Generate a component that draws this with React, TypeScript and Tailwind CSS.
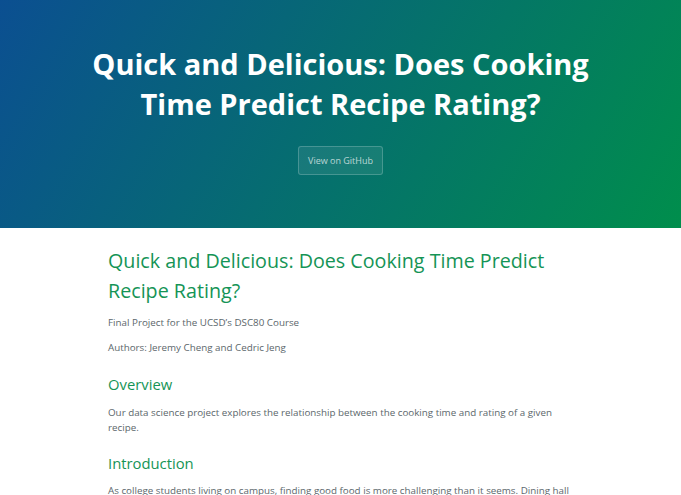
export default function App() {
  return (
    <div className="min-h-[495px] bg-white font-['Open_Sans',sans-serif] text-[#5b666b]">
      {/* Page header */}
      <section className="flex flex-col items-center pt-[44px] pb-[53px] text-center text-white bg-[linear-gradient(120deg,#0b4f91,#008e4c)]">
        <h1 className="w-[520px] text-[29px] font-bold leading-[40px]">
          Quick and Delicious: Does Cooking Time Predict Recipe Rating?
        </h1>
        <a
          href="#"
          className="mt-[22px] inline-block rounded-[3px] border border-white/20 bg-white/[0.08] px-[9px] py-[6.5px] text-[9px] leading-[14px] text-white/70"
        >
          View on GitHub
        </a>
      </section>

      {/* Main content */}
      <main className="mx-auto max-w-[465px] pt-[18px] text-[9.8px] leading-[15px]">
        <h1 className="mb-[9px] text-[19.7px] leading-[30px] text-[#159456]">
          Quick and Delicious: Does Cooking Time Predict Recipe Rating?
        </h1>
        <p className="mb-[10px]">Final Project for the UCSD’s DSC80 Course</p>
        <p className="mb-[10px]">Authors: Jeremy Cheng and Cedric Jeng</p>

        <h2 className="mt-[18px] mb-[10px] text-[14.8px] leading-[22px] text-[#159456]">Overview</h2>
        <p className="mb-[10px]">
          Our data science project explores the relationship between the cooking time and rating of a given recipe.
        </p>

        <h2 className="mt-[17px] mb-[9px] text-[14.8px] leading-[22px] text-[#159456]">Introduction</h2>
        <p className="mb-[10px]">
          As college students living on campus, finding good food is more challenging than it seems. Dining hall
          food can get repetitive, and cooking for ourselves takes time we often don’t have.
        </p>
      </main>
    </div>
  );
}
